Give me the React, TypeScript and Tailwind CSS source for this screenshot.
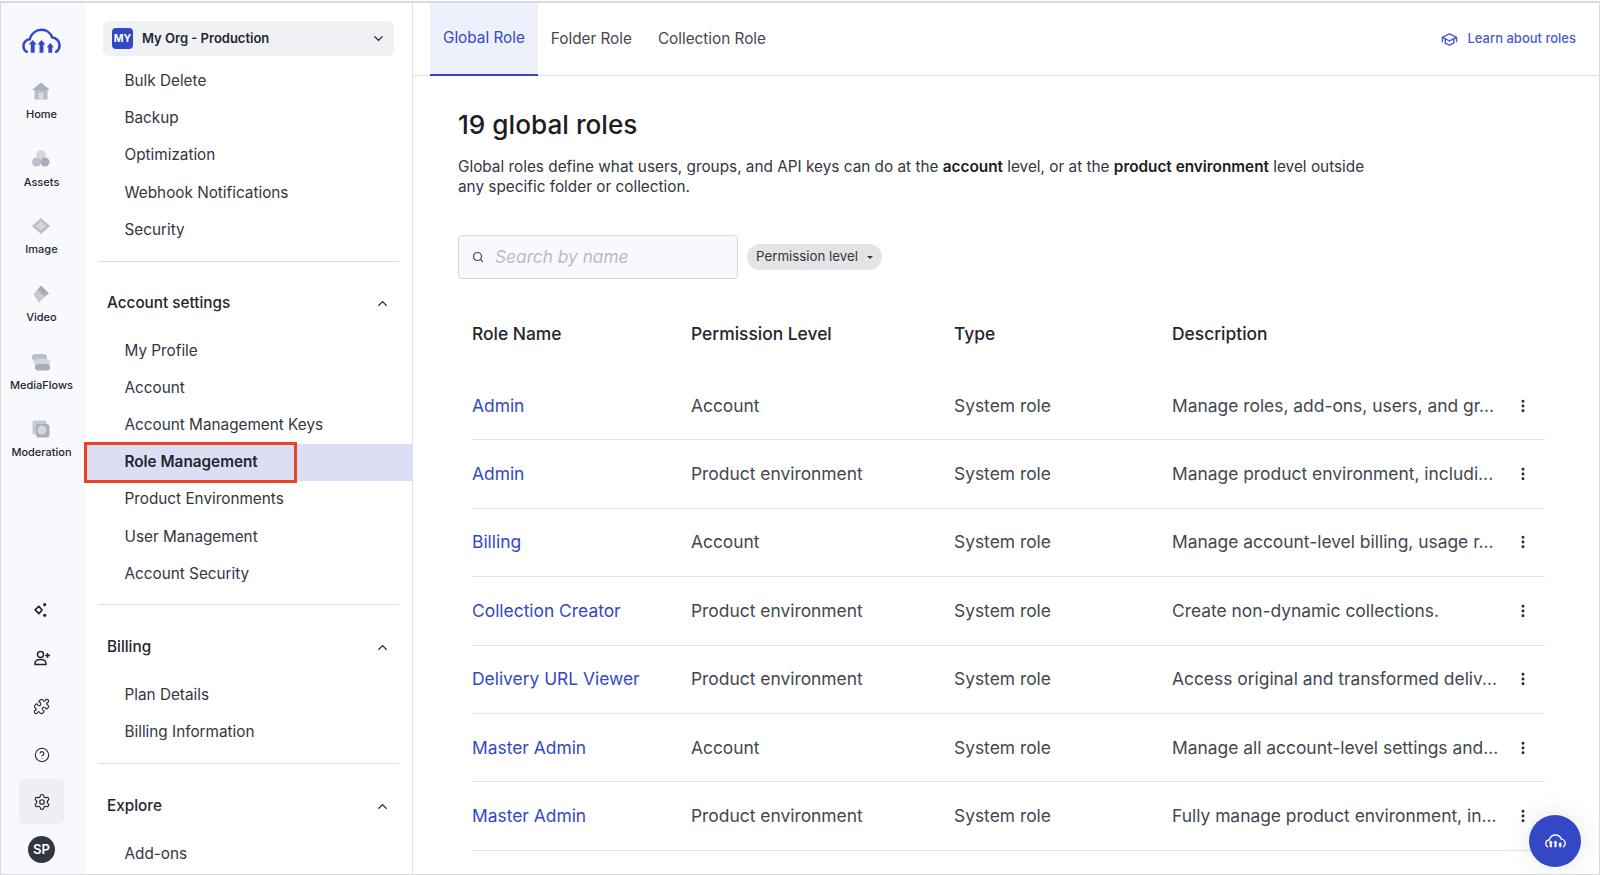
import { ChevronDown, ChevronUp, CircleHelp, EllipsisVertical, Puzzle, Search, Settings } from 'lucide-react';

const roles = [
  { name: 'Admin', level: 'Account', desc: 'Manage roles, add-ons, users, and gr...' },
  { name: 'Admin', level: 'Product environment', desc: 'Manage product environment, includi...' },
  { name: 'Billing', level: 'Account', desc: 'Manage account-level billing, usage r...' },
  { name: 'Collection Creator', level: 'Product environment', desc: 'Create non-dynamic collections.' },
  { name: 'Delivery URL Viewer', level: 'Product environment', desc: 'Access original and transformed deliv...' },
  { name: 'Master Admin', level: 'Account', desc: 'Manage all account-level settings and...' },
  { name: 'Master Admin', level: 'Product environment', desc: 'Fully manage product environment, in...' },
];

function CloudLogo({ className }: { className?: string }) {
  return (
    <svg viewBox="0 0 40 26" className={className} fill="none">
      <path
        d="M5 24C2.800 23 1.500 20.500 1.500 18c0-3.600 2.800-6.600 6.400-6.800C9.600 5.400 14.400 1.500 20 1.500c5 0 9.400 3.200 11 7.800 4 .3 7.500 3.800 7.500 8.200 0 3-1.500 5.200-3.500 6.500"
        stroke="currentColor"
        strokeWidth="2.600"
        strokeLinecap="round"
      />
      <path d="M11 12l4 4.500h-2V25H9v-8.500H7zM20 12l4 4.500h-2V25h-4v-8.500h-2zM29 15l3.700 4.500H31V25h-4v-5.500h-1.700z" fill="currentColor" />
    </svg>
  );
}

function HomeIcon() {
  return (
    <svg viewBox="0 0 20 20" className="h-[20px] w-[20px]">
      <path d="M10 1.500 19 9H1z" fill="#adb0bd" />
      <path d="M3.500 9h13v9.500h-13z" fill="#b9bcc8" />
      <path d="M7.500 11.500h5v7h-5z" fill="#d9dbe4" />
    </svg>
  );
}

function AssetsIcon() {
  return (
    <svg viewBox="0 0 20 20" className="h-[20px] w-[20px]">
      <circle cx="10" cy="6" r="4.800" fill="#d5d7e0" />
      <circle cx="5.500" cy="13" r="4.500" fill="#bcbfca" />
      <circle cx="14" cy="13" r="4.500" fill="#a9acb9" />
    </svg>
  );
}

function ImageIcon() {
  return (
    <svg viewBox="0 0 20 20" className="h-[20px] w-[20px]">
      <path d="M10 2 19 10 10 18 1 10z" fill="#bcbfca" />
      <path d="M10 5.500 15 10 10 14.500 5 10z" fill="#d5d7e0" />
    </svg>
  );
}

function VideoIcon() {
  return (
    <svg viewBox="0 0 20 20" className="h-[20px] w-[20px]">
      <path d="M10 1.500 18 9.500 11 15.500 8 19 2.500 10z" fill="#c6c8d2" />
      <path d="M10 1.500 18 9.500 13 12 6.500 6z" fill="#a9acb9" />
    </svg>
  );
}

function FlowsIcon() {
  return (
    <svg viewBox="0 0 20 20" className="h-[20px] w-[20px]">
      <rect x="1" y="2" width="15" height="7" rx="3.500" fill="#bcbfca" />
      <rect x="3" y="7" width="16" height="6" rx="3" fill="#d5d7e0" />
      <rect x="4" y="12" width="15" height="6.500" rx="3" fill="#a9acb9" />
    </svg>
  );
}

function ModerationIcon() {
  return (
    <svg viewBox="0 0 20 20" className="h-[20px] w-[20px]">
      <rect x="1.500" y="1.500" width="14" height="14" rx="2" fill="#c6c8d2" />
      <rect x="5" y="5" width="13.500" height="13.500" rx="3" fill="#a9acb9" />
      <circle cx="11" cy="11" r="4.500" fill="#d5d7e0" />
    </svg>
  );
}

function Sparkles() {
  return (
    <svg viewBox="0 0 16 16" className="h-[17px] w-[17px] text-[#23262f]" fill="none">
      <path d="M5.500 4 8.500 7.500 5.500 11 2 7.500z" stroke="currentColor" strokeWidth="1.600" strokeLinejoin="round" />
      <circle cx="11" cy="2.500" r="1.500" fill="currentColor" />
      <circle cx="11" cy="12.500" r="1.500" fill="currentColor" />
    </svg>
  );
}

function AddUser() {
  return (
    <svg viewBox="0 0 18 18" className="h-[18px] w-[18px]" fill="none" stroke="currentColor" strokeWidth="1.500">
      <circle cx="7.500" cy="5.500" r="3" />
      <path d="M2 15.500v-1c0-2.500 2.500-4 5.500-4s5.500 1.500 5.500 4v1z" strokeLinejoin="round" />
      <path d="M14.500 4v5M12 6.500h5" />
    </svg>
  );
}

function LearnCap() {
  return (
    <svg viewBox="0 0 24 24" className="h-[17px] w-[17px]" fill="none" stroke="currentColor" strokeWidth="2" strokeLinecap="round" strokeLinejoin="round">
      <path d="M22 9 12 4 2 9l10 5 10-5v6" />
      <path d="M2 9v6M6 11.500V17l6 3 6-3v-5.500" />
    </svg>
  );
}

const railItems = [
  { label: 'Home', icon: <HomeIcon /> },
  { label: 'Assets', icon: <AssetsIcon /> },
  { label: 'Image', icon: <ImageIcon /> },
  { label: 'Video', icon: <VideoIcon /> },
  { label: 'MediaFlows', icon: <FlowsIcon /> },
  { label: 'Moderation', icon: <ModerationIcon /> },
];

function Rail() {
  return (
    <aside className="flex h-full w-[84px] shrink-0 flex-col items-center bg-[#f8f9fc] pt-[25px] pr-[3px]">
      <CloudLogo className="h-[26px] w-[39px] text-[#3448c5]" />
      <div className="mt-[27px] flex flex-col items-center">
        {railItems.map((item) => (
          <div key={item.label} className="flex h-[67.700px] flex-col items-center">
            <div className="h-[20px]">{item.icon}</div>
            <span className="mt-[6px] text-[11px] leading-[14px] font-medium text-[#23262f]">{item.label}</span>
          </div>
        ))}
      </div>
      <div className="mt-auto flex flex-col items-center pb-[11px] text-[#23262f]">
        <div className="flex h-[48px] items-center"><Sparkles /></div>
        <div className="flex h-[48px] items-center"><AddUser /></div>
        <div className="flex h-[48px] items-center"><Puzzle size={17} strokeWidth={1.600} /></div>
        <div className="flex h-[49px] items-center"><CircleHelp size={16} strokeWidth={1.600} /></div>
        <div className="flex h-[45px] w-[45px] items-center justify-center rounded-[5px] bg-[#eeeff2]">
          <Settings size={18} strokeWidth={1.600} />
        </div>
        <div className="mt-[12px] flex h-[27px] w-[27px] items-center justify-center rounded-full bg-[#33363f] text-[13px] font-semibold text-white">SP</div>
      </div>
    </aside>
  );
}

function NavRow({ label, active }: { label: string; active?: boolean }) {
  return (
    <div className={`flex h-[37.150px] items-center pl-[39.500px] text-[15.300px] ${active ? 'bg-[#dcdef4] font-semibold text-[#23262f]' : 'text-[#33363f]'}`}>
      {label}
    </div>
  );
}

function NavGroup({ title, items, active }: { title: string; items: string[]; active?: string }) {
  return (
    <div>
      <div className="flex h-[37px] items-center justify-between pl-[22px] pr-[22px] text-[15.300px] font-medium text-[#23262f]">
        {title}
        <ChevronUp size={15} strokeWidth={2.200} />
      </div>
      <div className="mt-[10.500px]">
        {items.map((item) => (
          <NavRow key={item} label={item} active={item === active} />
        ))}
      </div>
    </div>
  );
}

function Divider() {
  return <div className="mx-[13px] border-t border-[#dadde8]" />;
}

function SideNav() {
  return (
    <nav className="h-full w-[328px] shrink-0 overflow-hidden border-r border-[#dfe1e8] bg-white pt-[18px]">
      <div className="mx-[18px] flex h-[35px] items-center rounded-[6px] bg-[#f0f1f5] pl-[9px] pr-[8px]">
        <span className="flex h-[21px] w-[21px] items-center justify-center rounded-[4px] bg-[#3448c5] text-[10.500px] font-bold text-white">MY</span>
        <span className="ml-[9px] text-[13px] font-semibold text-[#23262f]">My Org - Production</span>
        <ChevronDown size={15} strokeWidth={2.200} className="ml-auto text-[#23262f]" />
      </div>
      <div className="mt-[7px] mb-[12px]">
        {['Bulk Delete', 'Backup', 'Optimization', 'Webhook Notifications', 'Security'].map((item) => (
          <NavRow key={item} label={item} />
        ))}
      </div>
      <Divider />
      <div className="mt-[23.500px] mb-[11.500px]">
        <NavGroup
          title="Account settings"
          active="Role Management"
          items={['My Profile', 'Account', 'Account Management Keys', 'Role Management', 'Product Environments', 'User Management', 'Account Security']}
        />
      </div>
      <Divider />
      <div className="mt-[24px] mb-[12px]">
        <NavGroup title="Billing" items={['Plan Details', 'Billing Information']} />
      </div>
      <Divider />
      <div className="mt-[24px]">
        <NavGroup title="Explore" items={['Add-ons']} />
      </div>
    </nav>
  );
}

function Tabs() {
  return (
    <div className="flex h-[73px] shrink-0 items-stretch border-b border-[#dcdee6] pl-[17px] pr-[23px] text-[15.300px] text-[#44474f]">
      <div className="-mb-px flex items-center border-b-[2px] border-[#3448c5] bg-[#eef0fb] px-[13px] text-[#3448c5]">Global Role</div>
      <div className="ml-[13px] flex items-center">Folder Role</div>
      <div className="ml-[26px] flex items-center">Collection Role</div>
      <div className="ml-auto flex items-center gap-[9px] text-[13px] font-medium text-[#4a5bc9]">
        <LearnCap />
        Learn about roles
      </div>
    </div>
  );
}

function RolesTable() {
  return (
    <div className="ml-[14px] mr-[54px] mt-[38px] text-[17.400px] text-[#44474f]">
      <div className="grid h-[34px] grid-cols-[219px_263px_218px_1fr] items-center text-[#23262f] font-medium">
        <span>Role Name</span>
        <span>Permission Level</span>
        <span>Type</span>
        <span>Description</span>
      </div>
      {roles.map((role, i) => (
        <div key={i} className={`grid h-[68.400px] grid-cols-[219px_263px_218px_1fr] items-center border-b border-[#e3e4ea] ${i === 0 ? 'mt-[21px]' : ''}`}>
          <span className="text-[#3448c5]">{role.name}</span>
          <span>{role.level}</span>
          <span>System role</span>
          <div className="flex items-center justify-between">
            <span className="whitespace-nowrap">{role.desc}</span>
            <EllipsisVertical size={16} strokeWidth={2.400} className="mr-[14px] shrink-0 text-[#23262f]" />
          </div>
        </div>
      ))}
    </div>
  );
}

function Main() {
  return (
    <main className="relative flex h-full min-w-0 flex-1 flex-col overflow-hidden bg-white">
      <Tabs />
      <div className="flex-1 pl-[45px]">
        <h1 className="mt-[29px] text-[26.200px] leading-[40px] font-medium text-[#1b1d24]">19 global roles</h1>
        <p className="mt-[12px] w-[920px] text-[15.340px] leading-[20px] text-[#33363f]">
          Global roles define what users, groups, and API keys can do at the <b className="font-semibold text-[#1b1d24]">account</b> level, or at the <b className="font-semibold text-[#1b1d24]">product environment</b> level outside any specific folder or collection.
        </p>
        <div className="mt-[38px] flex items-center gap-[9px]">
          <div className="flex h-[44px] w-[280px] items-center rounded-[4px] border border-[#d5d7e0] bg-[#f8f9fc] pl-[13px]">
            <Search size={12} strokeWidth={2.400} className="text-[#44474f]" />
            <span className="ml-[11px] text-[17.300px] italic text-[#b9bcc8]">Search by name</span>
          </div>
          <div className="flex h-[26px] items-center rounded-full bg-[#e3e4e6] px-[9px] text-[13.300px] text-[#33363f]">
            Permission level
            <span className="ml-[9px] h-0 w-0 border-x-[3px] border-t-[3.500px] border-x-transparent border-t-[#33363f]" />
          </div>
        </div>
        <RolesTable />
      </div>
      <div className="absolute bottom-[7px] right-[18px] flex h-[52px] w-[52px] items-center justify-center rounded-full bg-[#3448c5] shadow-[0_0_24px_rgba(30,40,90,0.12)]">
        <CloudLogo className="h-[14px] w-[21px] text-white" />
      </div>
    </main>
  );
}

export default function App() {
  return (
    <div className="h-[875px] w-[1600px] overflow-hidden border-t border-white bg-[#d8d9dd] pt-[2px] px-px pb-px font-['Inter',sans-serif]">
      <div className="relative flex h-full w-full overflow-hidden bg-white">
        <Rail />
        <SideNav />
        <Main />
        {/* annotation box round the active row */}
        <div className="absolute left-[83px] top-[439px] h-[41px] w-[213px] border-[3px] border-[#ea4324]" />
      </div>
    </div>
  );
}
